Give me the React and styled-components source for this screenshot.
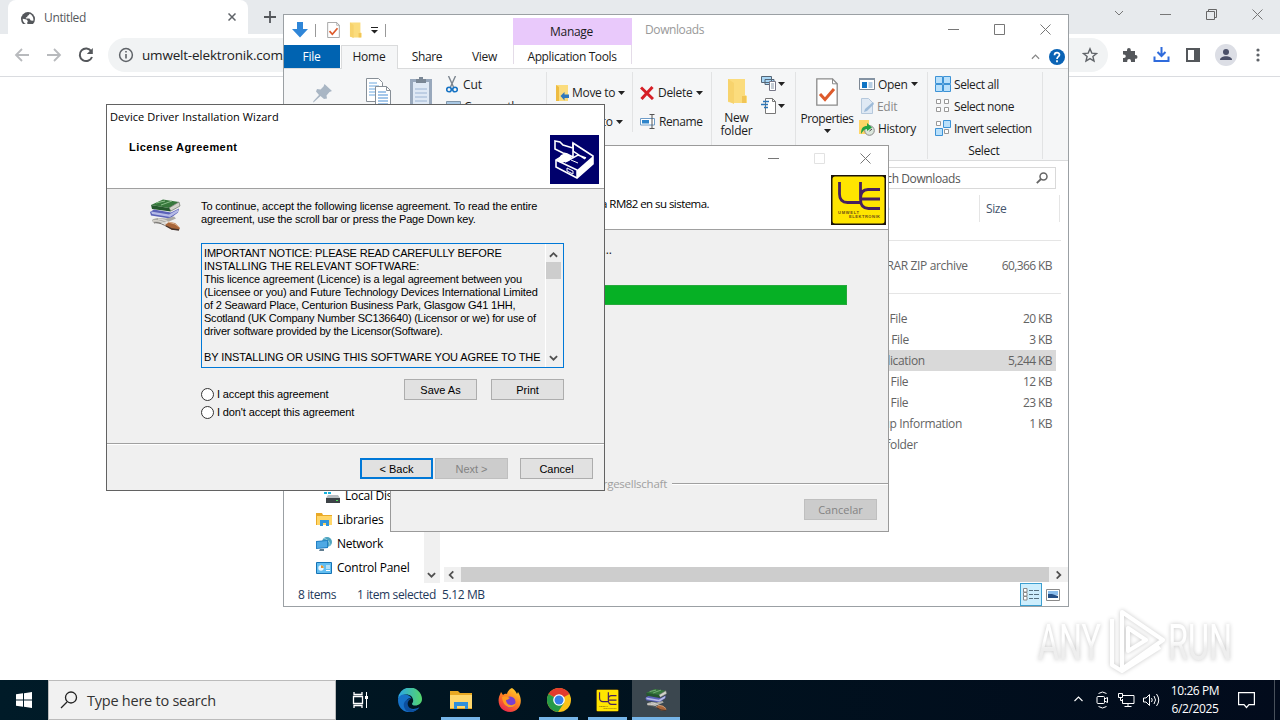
import React from 'react';
import styled, { createGlobalStyle, css } from 'styled-components';

const ui = '"Open Sans", "Noto Sans", sans-serif';
const dialog = '"Liberation Sans", Arial, sans-serif';

const GlobalStyle = createGlobalStyle`
  *, *::before, *::after {
    box-sizing: border-box;
  }
  body {
    margin: 0;
    overflow: hidden;
    background: #fff;
    font-family: ${ui};
    font-size: 12px;
    color: #1b1b1b;
  }
  svg {
    display: block;
    flex: none;
  }
`;

/* ---------- icons ---------- */

const Icon = ({ w = 16, h = w, vw = w, vh = h, children }) => (
  <svg width={w} height={h} viewBox={`0 0 ${vw} ${vh}`} fill="none">{children}</svg>
);

const Caret = () => <Icon w={7} h={4}><path d="M0 0h7L3.5 4z" fill="#222" /></Icon>;

const Chevron = ({ dir = 'down', color = '#505050', size = 9, stroke = 2 }) => {
  const turn = { down: 0, left: 90, up: 180, right: 270 }[dir];
  return (
    <Icon w={size} vw={10}>
      <path d="M1 3l4 4 4-4" stroke={color} strokeWidth={stroke} transform={`rotate(${turn} 5 5)`} />
    </Icon>
  );
};

const Minimize = ({ color = '#777' }) => <Icon w={11}><path d="M0 5.5h11" stroke={color} /></Icon>;
const Maximize = ({ color = '#777' }) => <Icon w={11}><path d="M.5.5h10v10H.5z" stroke={color} /></Icon>;
const Close = ({ color = '#777' }) => <Icon w={11}><path d="M.5.5l10 10m0-10l-10 10" stroke={color} /></Icon>;
const Restore = () => <Icon w={11}><path d="M.5 2.5h8v8h-8zM2.500 2.500v-2h8v8h-2" stroke="#666" /></Icon>;

const Globe = () => (
  <Icon w={14} vw={20}>
    <circle cx="10" cy="10" r="10" fill="#54575b" />
    <path d="M2.500 9.500l5.500 1 2 2.500-1 1v3.500c-4-.5-7-4-6.500-8zM12 2.500c0 2-1 2-3 3v2H7V9h5l2 3 3.500.5c1-4-1.500-9-5.500-10z" fill="#fff" />
  </Icon>
);

const NavArrow = ({ flip }) => (
  <Icon w={16}>
    <g transform={flip ? 'matrix(-1 0 0 1 16 0)' : undefined}>
      <path d="M15 8H2m6-6L2 8l6 6" stroke="#b8babd" strokeWidth="1.800" />
    </g>
  </Icon>
);

const Reload = () => (
  <Icon w={16}>
    <path d="M13.300 4.200A6.300 6.300 0 1 0 14 10" stroke="#54575b" strokeWidth="2" />
    <path d="M14.800 1v6h-6z" fill="#54575b" />
  </Icon>
);

const Info = () => (
  <Icon w={16}>
    <circle cx="8" cy="8" r="6.400" stroke="#5f6368" strokeWidth="1.500" />
    <path d="M8 7v4.500M8 4v1.600" stroke="#5f6368" strokeWidth="1.600" />
  </Icon>
);

const Star = () => (
  <Icon w={16}>
    <path d="M8 1.800l1.800 4.300 4.700.4-3.600 3 1.100 4.500L8 11.600 4 14l1.100-4.500-3.600-3 4.700-.4z" stroke="#5f6368" strokeWidth="1.400" />
  </Icon>
);

const Puzzle = () => (
  <Icon w={16}>
    <path d="M1 4h4V3a1.900 1.900 0 0 1 3.800 0v1H13v4h.6a1.900 1.900 0 0 1 0 3.800H13V15H9v-1a1.900 1.900 0 0 0-3.800 0v1H1v-4h1a1.800 1.800 0 0 0 0-3.600H1z" fill="#54575b" />
  </Icon>
);

const DownloadIcon = () => (
  <Icon w={17}>
    <path d="M8.500 1v8M4.500 6l4 4 4-4M1.500 10.500v4.500h14v-4.500" stroke="#2f6bdc" strokeWidth="2" />
  </Icon>
);

const SidePanel = () => (
  <Icon w={14}><path d="M1 1h12v12H1z" stroke="#54575b" strokeWidth="2" /><path d="M8 1h5v12H8z" fill="#54575b" /></Icon>
);

const Person = () => (
  <Icon w={22}>
    <circle cx="11" cy="11" r="11" fill="#dcdee5" />
    <circle cx="11" cy="8" r="3" fill="#4b5068" />
    <path d="M5 16c0-5 12-5 12 0z" fill="#4b5068" />
  </Icon>
);

const Dots = () => (
  <Icon w={4} h={16}>
    <circle cx="2" cy="3" r="1.600" fill="#5f6368" /><circle cx="2" cy="8" r="1.600" fill="#5f6368" /><circle cx="2" cy="13" r="1.600" fill="#5f6368" />
  </Icon>
);

const BlueArrow = () => <Icon w={16}><path d="M5 0h6v7h5l-8 8.500L0 7h5z" fill="#2f86d8" /></Icon>;

const MoreArrow = () => <Icon w={7} h={7}><path d="M0 .5h7" stroke="#222" /><path d="M0 3h7L3.500 6.500z" fill="#222" /></Icon>;

const CheckedPage = ({ w = 13, h = 16 }) => (
  <Icon w={w} h={h} vw={22} vh={28}>
    <path d="M.8.800h15.700l4.700 5v21.400H.8z" fill="#fff" stroke="#8b8b8b" strokeWidth="1.300" />
    <path d="M16.500.800v5h4.700" stroke="#8b8b8b" />
    <path d="M4 16l5 5.500 9-10.500" stroke="#dd5a2b" strokeWidth="3" />
  </Icon>
);

const Folder = ({ w = 13, h = 16 }) => (
  <Icon w={w} h={h} vw={20} vh={26}>
    <path d="M1 1h17v16l2 1v7H6l-5-1z" fill="#fbdc7d" />
    <path d="M1 1l6 4v21l-6-3z" fill="#f7d36d" />
    <path d="M15 18h4v7h-4z" fill="#f1c557" />
  </Icon>
);

const Pin = () => (
  <Icon w={22}>
    <path d="M12.500 2l7.500 7-2.500 1-3 3.500.5 3-3 .5-3.500-3L2 20l-1 .5.500-1.500 5.500-6-3-3.500L5 7l3.500.5 3-3z" fill="#a9b6c4" />
  </Icon>
);

const CopyPages = () => (
  <Icon w={26} h={30}>
    <path d="M.5.500h12l4 4v19H.500z" fill="#fff" stroke="#878f97" />
    <path d="M3 5h8M3 8h10M3 11h10M3 14h10M3 17h8" stroke="#6da8e0" />
    <path d="M9.500 8.500h11l4 4v17h-15z" fill="#fff" stroke="#878f97" />
    <path d="M20.500 8.500v4h4" stroke="#878f97" />
    <path d="M12 14h8M12 17h10M12 20h10M12 23h10M12 26h10" stroke="#4b8fd5" />
  </Icon>
);

const Clipboard = () => (
  <Icon w={22} h={30}>
    <path d="M1.500 3.500h19v26h-19z" fill="#dfe9f5" stroke="#98a8bc" strokeWidth="3" />
    <path d="M6 2h10v4H6z" fill="#7a8795" /><path d="M9 0h4v3H9z" fill="#7a8795" />
    <path d="M5 12h12M5 16h12M5 20h12M5 24h12" stroke="#9cb4d3" />
  </Icon>
);

const Scissors = () => (
  <Icon w={12} h={17}>
    <path d="M2.500 0l5 11M9.500 0l-5 11" stroke="#7b858f" strokeWidth="1.400" />
    <circle cx="3" cy="13.500" r="2.300" stroke="#1673c4" strokeWidth="1.600" />
    <circle cx="9" cy="13.500" r="2.300" stroke="#1673c4" strokeWidth="1.600" />
  </Icon>
);

const PathBox = () => <Icon w={15} h={11}><path d="M.5.500h14v10H.5z" fill="#a9c8e4" stroke="#8096aa" /></Icon>;

const FolderTo = () => (
  <Icon w={13} h={16}>
    <path d="M0 0h12v16H0z" fill="#fbdc7d" /><path d="M0 0l3 2v14H0z" fill="#eebc42" />
    <path d="M4.500 11l4-4v2.500H13v3.500H8.500v2.500z" fill="#2f78bd" />
  </Icon>
);

const RedCross = () => <Icon w={14}><path d="M1 1.500l12 11.500M12.500 1L1.500 13" stroke="#d61f26" strokeWidth="3" /></Icon>;

const RenameIcon = () => (
  <Icon w={16} h={15}>
    <path d="M.5 4.500h14v6.500H.5z" fill="#fff" stroke="#6e9cc8" /><path d="M2 6h7v3.500H2z" fill="#2d84cb" />
    <path d="M9.500.500h5M12 .5v14M9.500 14.500h5" stroke="#555" />
  </Icon>
);

const NewItem = () => (
  <Icon w={17} h={16}>
    <path d="M.5.500h10v6H.5zM4 3.500h9v5H4z" fill="#a8d6f5" stroke="#567" />
    <path d="M8.500 5.500h6v9h-6z" fill="#fff" stroke="#778" /><path d="M10 8h3M10 10h3M10 12h3" stroke="#89a" />
  </Icon>
);

const EasyAccess = () => (
  <Icon w={17} h={16}>
    <path d="M4.500.500h7l3 3v12h-10z" fill="#fff" stroke="#777" /><path d="M11.500.500v3h3" stroke="#777" />
    <path d="M2 3.500h6M0 6.500h7M3 9.500h4" stroke="#2a75b8" strokeWidth="1.300" />
  </Icon>
);

const OpenIcon = () => (
  <Icon w={16} h={12}>
    <path d="M.5.500h15v11H.5z" fill="#fff" stroke="#7c8793" /><path d="M0 0h16v2H0z" fill="#8493a3" />
    <path d="M3 4h5v6H3z" fill="#0f74c4" /><path d="M9.500 5h4M9.500 7h4M9.500 9h4" stroke="#6d9dc8" />
  </Icon>
);

const EditIcon = () => (
  <Icon w={15} h={16}>
    <path d="M2.500.500h7l4 4v11h-11z" fill="#dfe9f4" stroke="#b5c8dc" /><path d="M5 14l1-3 8-7 1 2-7 7z" fill="#9dbbd9" />
  </Icon>
);

const HistoryIcon = () => (
  <Icon w={16}>
    <path d="M0 0h10v14H0z" fill="#ffd667" /><circle cx="10.500" cy="10.500" r="4.800" fill="#dbe6dc" stroke="#888" />
    <path d="M2 14C2 8 4 6 8 6V3l5 4.500L8 11V9c-3 0-4 2-6 5z" fill="#27a343" /><path d="M10.500 11l2.500-2" stroke="#444" />
  </Icon>
);

const SelectGrid = ({ on }) => (
  <Icon w={16}>
    {[[1, 1], [9, 1], [1, 9], [9, 9]].map(([x, y], i) => (
      <g key={i}>
        {on[i] ? <path d={`M${x - 0.5} ${y - 0.5}h7v7h-7z`} fill="#b9e0fb" stroke="#3d93d6" />
          : <path d={`M${x + 0.5} ${y + 0.5}h4v4h-4z`} fill="#fff" stroke="#999" />}
      </g>
    ))}
  </Icon>
);

const Help = () => (
  <Icon w={16}>
    <circle cx="8" cy="8" r="8" fill="#0a63b5" />
    <path d="M5.500 6.200c0-3.400 5-3.100 5-.4C10.500 7.800 8 7.600 8 10M8 11.300v1.900" stroke="#fff" strokeWidth="1.700" />
  </Icon>
);

const Magnifier = () => (
  <Icon w={12}><circle cx="7.500" cy="4.500" r="3.500" stroke="#666" strokeWidth="1.500" /><path d="M5 7L.8 11.200" stroke="#666" strokeWidth="1.800" /></Icon>
);

const DiskIcon = () => (
  <Icon w={16}>
    <path d="M0 0h3v3H0zM4 0h3v3H4zM0 4h3v2H0zM4 4h3v2H4z" fill="#16b3dd" />
    <path d="M4 7h10l2 3H2z" fill="#b9bec2" /><path d="M2 10h14v5H2z" fill="#3d4347" /><path d="M12 12h2v1h-2z" fill="#4ce05a" />
  </Icon>
);

const LibrariesIcon = () => (
  <Icon w={16}>
    <path d="M0 1h6l1 2h9v10H0z" fill="#e9a927" /><path d="M1 4h15v9H1z" fill="#ffd668" />
    <path d="M4 14V8h9v6h-3v-3H7v3z" fill="#2d93dc" />
  </Icon>
);

const NetworkIcon = () => (
  <Icon w={16}>
    <circle cx="11" cy="6" r="5" fill="#4da3bf" /><path d="M8 2c4 2 6 4 6 8" stroke="#9ed6e8" />
    <path d="M0 5l12-1v8L0 13z" fill="#2380c4" /><path d="M1 6l10-1v6L1 12z" fill="#4fa9e4" /><path d="M4 13h4v2H3z" fill="#617d90" />
  </Icon>
);

const ControlIcon = () => (
  <Icon w={16} h={12}>
    <path d="M.500.500h15v11H.500z" fill="#62bdf0" stroke="#1573b5" />
    <circle cx="5" cy="6" r="2.700" fill="#eaf7ff" /><path d="M5 6V3.300A2.700 2.700 0 0 1 7.700 6z" fill="#e8942a" />
    <path d="M10 4h4M10 6h4M10 8.500h4" stroke="#fff" />
  </Icon>
);

const DetailsIcon = () => (
  <Icon w={17} h={13}>
    {[0, 4, 8].map(y => (
      <g key={y}><path d={`M.5 ${y + 0.5}h3.500v3.500H.5z`} fill="#fff" stroke="#888" /><path d={`M6 ${y + 2.5}h4m1 0h5`} stroke="#55707f" /></g>
    ))}
  </Icon>
);

const ThumbIcon = () => (
  <Icon w={14} h={12}>
    <path d="M.5.500h13v11H.5z" fill="#fff" stroke="#8a8a8a" /><path d="M2 2h10v4H2z" fill="#8bbdec" /><path d="M2 5l4 0 6 2v2H2z" fill="#254f86" />
  </Icon>
);

const UeLogo = ({ w = 55, h = 50 }) => (
  <svg width={w} height={h} viewBox="0 0 55 50" preserveAspectRatio="none" fill="none">
    <path d="M0 0h55v50H0z" fill="#1b130a" />
    <rect x="1.500" y="1.500" width="52" height="47" rx="2.500" fill="#ffe500" />
    <path d="M8.500 7v12q0 8.500 8 8.500H29.500M29.500 7v17q0 9.500 8 9.500H49M49 14.500H37q-7.500 0-7.500 9M29.500 24H49" stroke="#46205f" strokeWidth="2.800" />
    <text x="7" y="39" fontFamily={dialog} fontSize="4" fontWeight="700" fill="#6a4a18" textLength="21">UMWELT</text>
    <text x="18" y="43" fontFamily={dialog} fontSize="4" fontWeight="700" fill="#6a4a18" textLength="31">ELEKTRONIK</text>
  </svg>
);

const SetupBox = () => (
  <Icon w={49}>
    <path d="M0 0h49v49H0z" fill="#00006c" />
    <path d="M23 8l20 13v8L27 43 6 32v-7l17-10z" fill="#00006c" stroke="#fff" strokeWidth="1.600" />
    <path d="M27 35l16-14v8L27 43z" fill="#fff" />
    <path d="M6 25l21 10v8M23 8v8l12 8M15 27l13-7 8 3" stroke="#fff" strokeWidth="1.500" />
    <path d="M21 25l7 3M17 33l6 3v3l-6-3z" stroke="#fff" />
    <path d="M5 6l5 1 3 3 10 3v9l-6-3-4-1-8-4z" fill="#00006c" stroke="#fff" strokeWidth="1.600" />
    <path d="M11 20l5-2 6 4-3 4-8 2-4-2z" fill="#fff" />
  </Icon>
);

const Books = ({ w = 34, h = 32 }) => (
  <Icon w={w} h={h} vw={34} vh={32}>
    <path d="M3 6L15 .500l16 2.500-10 6z" fill="#37783c" />
    <path d="M8 4l9-2M13 6l11-4" stroke="#8cbf8c" />
    <path d="M21 9l10-6 1 4-9 5z" fill="#d4d4cc" stroke="#6a7468" strokeWidth=".7" />
    <path d="M3 6l18 3 2 3.500-19-2.500z" fill="#24582c" />
    <path d="M2 13l4-2.500 17 3 8-4-1 4-8 6-19-3z" fill="#5b62b8" />
    <path d="M3 12.500l18 3 9-5v2.500l-8 5-18-3z" fill="#b6bbe6" />
    <path d="M4 21c3-2.500 9-2 14-1.500l8-2 2 2-7 3-10 2-6-1z" fill="#aaa9a5" />
    <path d="M5 22c5-1 14 2 17 6M10 20c5 0 11 3 15 7" stroke="#d9d6cf" strokeWidth="1.400" />
    <path d="M6 24c4-1 8 1 12 3" stroke="#6f6c68" />
    <path d="M17 26l4-3 6 1 5 5-1 2h-7z" fill="#a8663b" />
    <path d="M18 27l6 3 7 1" stroke="#43322c" strokeWidth="1.300" />
    <path d="M20 23l7 2 4 3" stroke="#e0b28c" />
  </Icon>
);

const TaskView = () => (
  <Icon w={18}>
    <path d="M3 1v2.500h8V1M3 17v-2.500h8V17M2.500 5.500h9v7h-9z" stroke="#fff" strokeWidth="1.300" />
    <path d="M15.500 1v16" stroke="#fff" /><path d="M14 5h3v3h-3z" fill="#fff" />
  </Icon>
);

const Edge = () => (
  <Icon w={24}>
    <defs>
      <linearGradient id="edgeTop" x1="0" y1="0" x2="1" y2="0"><stop stopColor="#2aa6e8" /><stop offset="1" stopColor="#55d66b" /></linearGradient>
    </defs>
    <path d="M0 12a12 12 0 0 1 24-1c0 4-3 6.500-7 6.500-2 0-3-.8-3-1.600 0-1 1.200-1.200 1.200-3.400C15 8 11 6 7.500 6.500 3 7 0 10 0 12z" fill="url(#edgeTop)" />
    <path d="M0 12c0-4 4-6 7.500-5.500 3 .3 5 2 6 4C9 9.500 7 14 9 17.500c3 4.500 8 4 12.500 1.800C15 28 0 25 0 12z" fill="#1672c8" />
    <path d="M8.500 23c-5-5-3-12 5-12.500C8 13 9 19 13 21c3 1.500 6 .5 8.500-1.700C18 24 13 25 8.500 23z" fill="#0c4f9e" />
  </Icon>
);

const Files = () => (
  <Icon w={22} h={20}>
    <path d="M0 1h8l2 2h12v16H0z" fill="#e8a823" /><path d="M0 5h22v13H0z" fill="#ffd76c" />
    <path d="M4 19v-7h14v7h-3v-3H7v3z" fill="#2f8fdb" />
  </Icon>
);

const Firefox = () => (
  <Icon w={24}>
    <defs><linearGradient id="fox" x1=".8" y1="0" x2=".2" y2="1"><stop stopColor="#ffd42a" /><stop offset=".5" stopColor="#ff7b22" /><stop offset="1" stopColor="#e91e50" /></linearGradient></defs>
    <path d="M14 0c3 2 4 4 5 6l1-2c6 9 2 20-8 20C4 24-1 17 1 9c.5-2 1.500-3 2-5l2 3c1-1 3-1.500 4-1 .5-3 3-5 5-6z" fill="url(#fox)" />
    <circle cx="12" cy="14" r="5.500" fill="#7a3fd0" /><path d="M4 9c3-2 6 0 8 1-2 1-2 2-4 2 0 5 6 7 10 3-2 7-13 6-14-6z" fill="#ff9a1f" />
  </Icon>
);

const ChromeLogo = () => (
  <Icon w={24}>
    <circle cx="12" cy="12" r="12" fill="#fbc116" />
    <path d="M12 12L1.600 6A12 12 0 0 1 22.400 6z" fill="#e33b2e" />
    <path d="M12 12L1.600 6A12 12 0 0 0 11 24l6-9z" fill="#269a48" />
    <circle cx="12" cy="12" r="5.800" fill="#fff" /><circle cx="12" cy="12" r="4.500" fill="#357ee8" />
  </Icon>
);

const WindowsLogo = () => <Icon w={16}><path d="M0 2.300l7-1v6.200H0zM8 1.200L16 0v7.500H8zM0 8.500h7v6.200l-7-1zM8 8.500h8V16l-8-1.200z" fill="#fff" /></Icon>;

const SearchGlass = () => <Icon w={18}><circle cx="11" cy="6.500" r="5.500" stroke="#222" strokeWidth="1.300" /><path d="M7 11l-6 6" stroke="#222" strokeWidth="1.300" /></Icon>;

const MeetNow = () => (
  <Icon w={14} h={18}>
    <path d="M2.500 2.500q4-3 8 0M2.500 15.500q4 3 8 0" stroke="#fff" /><rect x="1" y="5.500" width="7.500" height="7" rx="1" stroke="#fff" /><path d="M8.500 8l3-1.500v5l-3-1.500z" stroke="#fff" />
  </Icon>
);

const Lan = () => (
  <Icon w={17} h={15}>
    <path d="M5 2.500h11v8H4.500V6M10 10.500v3M6.500 13.500h7M.5.500h4v4h-4zM2.500 4.500v3h2" stroke="#fff" />
  </Icon>
);

const Speaker = () => (
  <Icon w={17} h={14}>
    <path d="M.5 5H3l3.500-3.500v11L3 9H.500z" stroke="#fff" /><path d="M8.500 5q1.500 2 0 4M11 3q3 4 0 8M13.500 1q4.500 6 0 12" stroke="#fff" />
  </Icon>
);

const Bubble = () => <Icon w={17} h={17}><path d="M.600.600h15.800v12H11L8.500 15.500 6 12.600H.600z" stroke="#fff" strokeWidth="1.200" /></Icon>;

/* ---------- desktop & browser ---------- */

const Desktop = styled.div`
  position: relative;
  width: 1280px;
  height: 720px;
  overflow: hidden;
  display: flex;
  flex-direction: column;
`;

const Browser = styled.div`
  flex: 1;
  display: flex;
  flex-direction: column;
  background: #fff;
`;

const TabStrip = styled.div`
  display: flex;
  height: 34px;
  padding-left: 8px;
  background: #e7eaed;
`;

const BrowserTab = styled.div`
  display: flex;
  align-items: center;
  width: 240px;
  padding: 0 12px 0 13px;
  background: #fff;
  border-radius: 8px 8px 0 0;
  color: #55585c;
  letter-spacing: -0.35px;
  span {
    flex: 1;
    margin-left: 9px;
  }
`;

const NewTab = styled.div`
  display: flex;
  align-items: center;
  padding-left: 16px;
  flex: 1;
`;

const Controls = styled.div`
  display: flex;
  align-items: center;
  justify-content: flex-end;
  gap: ${props => props.$gap}px;
  padding-right: ${props => props.$right}px;
  height: ${props => props.$height}px;
`;

const Toolbar = styled.div`
  display: flex;
  align-items: center;
  height: 43px;
  padding: 0 20px 1px 14px;
  border-bottom: 1px solid #dadce0;
`;

const ToolGroup = styled.div`
  display: flex;
  align-items: center;
  gap: ${props => props.$gap}px;
  svg:nth-child(3):not(:last-child) {
    margin-left: 1px;
  }
  svg:nth-child(5) {
    margin-left: 4px;
  }
`;

const Omnibox = styled.div`
  display: flex;
  align-items: center;
  flex: 1;
  height: 34px;
  margin: 0 14px 0 14px;
  padding: 0 10px;
  border-radius: 17px;
  background: #f1f3f4;
  color: #222;
  font-size: 13.5px;
  letter-spacing: -0.2px;
  span {
    flex: 1;
    margin-left: 8px;
  }
`;

/* ---------- windows ---------- */

const Window = styled.section`
  position: absolute;
  display: flex;
  flex-direction: column;
  left: ${props => props.$x}px;
  top: ${props => props.$y}px;
  width: ${props => props.$w}px;
  height: ${props => props.$h}px;
  border: 1px solid ${props => props.$border};
  background: ${props => props.$bg || '#fff'};
`;

const TitleRow = styled.div`
  display: flex;
  height: 30px;
  flex: none;
`;

const QuickAccess = styled.div`
  display: flex;
  align-items: center;
  width: 229px;
  padding-left: 8px;
  > svg {
    margin-right: 9px;
  }
`;

const Divider = styled.i`
  width: 1px;
  height: 13px;
  margin: 0 11px 0 -2px;
  background: #999;
`;

const ManageTab = styled.div`
  width: 119px;
  margin-top: 3px;
  padding-right: 2px;
  background: #e9c9fb;
  text-align: center;
  line-height: 28px;
  letter-spacing: -0.3px;
`;

const WindowTitle = styled.div`
  flex: 1;
  padding-left: 13px;
  line-height: 30px;
  color: #999;
  letter-spacing: -0.4px;
`;

const RibbonTabs = styled.div`
  display: flex;
  flex: none;
  height: 24px;
  border-bottom: 1px solid #dadbdc;
`;

const RibbonTab = styled.div`
  width: ${props => props.$w}px;
  height: 24px;
  padding-right: 1px;
  line-height: 24px;
  text-align: center;
  letter-spacing: ${props => props.$ls ?? -0.2}px;
  ${props => props.$file && css`
    height: 23px;
    margin-right: 1px;
    background: #0063b1;
    color: #fff;
  `}
  ${props => props.$active && css`
    background: #f5f6f7;
    border: 1px solid #dadbdc;
    border-bottom: 0;
    line-height: 22px;
  `}
  ${props => props.$boxed && css`
    height: 19px;
    border-left: 1px solid #e4dce8;
    border-right: 1px solid #e4dce8;
  `}
`;

const TabsEnd = styled.div`
  display: flex;
  align-items: center;
  justify-content: flex-end;
  gap: 9px;
  flex: 1;
  padding-right: 3px;
`;

const Ribbon = styled.div`
  display: flex;
  flex: none;
  height: 92px;
  background: #f5f6f7;
  border-bottom: 1px solid #dadbdc;
`;

const RibbonGroup = styled.div`
  display: flex;
  width: ${props => props.$w}px;
  height: ${props => props.$h || 87}px;
  margin-top: 3px;
  padding: ${props => props.$pad || '1px 0 0'};
  border-right: 1px solid #e2e3e4;
`;

const Commands = styled.div`
  display: flex;
  flex-direction: column;
  margin-left: ${props => props.$left || 0}px;
  padding-top: ${props => props.$top || 0}px;
`;

const Command = styled.div`
  display: flex;
  align-items: center;
  flex: none;
  gap: ${props => props.$gap ?? 3}px;
  height: ${props => props.$h || 22}px;
  white-space: nowrap;
  color: ${props => (props.$off ? '#8a8a8a' : '#1e1e1e')};
  letter-spacing: ${props => props.$ls ?? -0.3}px;
`;

const BigCommand = styled.div`
  display: flex;
  flex-direction: column;
  align-items: center;
  width: ${props => props.$w}px;
  padding-top: 5px;
  text-align: center;
  line-height: 13px;
  letter-spacing: ${props => props.$ls || 0}px;
  > div {
    margin-top: ${props => props.$gap || 0}px;
    margin-bottom: 4px;
  }
`;

const GroupName = styled.div`
  flex: none;
  padding-left: 1px;
  text-align: center;
  line-height: 24px;
  letter-spacing: -0.3px;
`;

const AddressRow = styled.div`
  display: flex;
  justify-content: flex-end;
  flex: none;
  height: 34px;
  padding: 6px 12px 0 0;
`;

const SearchBox = styled.div`
  display: flex;
  align-items: center;
  justify-content: space-between;
  width: 203px;
  height: 22px;
  padding: 0 7px 0 9px;
  border: 1px solid #d9d9d9;
  color: #555;
  letter-spacing: -0.4px;
`;

const ExplorerBody = styled.div`
  display: flex;
  flex: 1;
`;

const NavPane = styled.div`
  display: flex;
  flex-direction: column;
  justify-content: flex-end;
  width: 140px;
  padding-bottom: 3px;
`;

const NavItem = styled.div`
  display: flex;
  align-items: center;
  gap: 5px;
  height: 24px;
  padding: 0 0 1px ${props => props.$indent}px;
  color: #000;
  letter-spacing: -0.25px;
  white-space: nowrap;
`;

const VScroll = styled.div`
  display: flex;
  flex-direction: column;
  justify-content: flex-end;
  width: 16px;
  margin-right: 4px;
  padding: 0 0 4px 3px;
  background: #f0f0f0;
`;

const FileList = styled.div`
  display: flex;
  flex-direction: column;
  flex: 1;
`;

const Columns = styled.div`
  display: grid;
  grid-template-columns: 420px 116px 80px;
  height: 27px;
  line-height: 27px;
  color: #44546c;
  letter-spacing: -0.4px;
  span {
    border-right: 1px solid #e5e5e5;
  }
  span:last-child {
    padding-left: 6px;
  }
`;

const GroupLine = styled.div`
  width: 617px;
  height: ${props => props.$h}px;
  margin-bottom: 14px;
  border-bottom: 1px solid #e5e5e5;
`;

const FileRow = styled.div`
  display: grid;
  grid-template-columns: 422px 120px 1fr;
  width: 612px;
  height: 21px;
  padding-right: 4px;
  line-height: 22px;
  color: #636363;
  letter-spacing: -0.35px;
  white-space: nowrap;
  background: ${props => (props.$selected ? '#d9d9d9' : 'none')};
  span:last-child {
    text-align: right;
    letter-spacing: -0.6px;
  }
`;

const HScroll = styled.div`
  display: flex;
  align-items: center;
  justify-content: space-between;
  height: 15px;
  margin: auto 0 1px;
  padding: 0 5px 0 3px;
  background: #f0f0f0;
  div {
    width: 588px;
    height: 15px;
    background: #cdcdcd;
  }
`;

const StatusBar = styled.div`
  display: flex;
  align-items: center;
  flex: none;
  height: 23px;
  padding: 0 8px 0 14px;
  color: #1e395b;
  letter-spacing: -0.38px;
`;

const StatusText = styled.span`
  width: ${props => props.$w}px;
  margin-right: ${props => (props.$grow ? 'auto' : 0)};
  white-space: nowrap;
`;

const ViewButton = styled.div`
  display: flex;
  align-items: center;
  justify-content: center;
  width: 22px;
  height: 23px;
  margin-right: 4px;
  border: 1px solid #3c9fd0;
  background: #cdeefd;
`;

/* ---------- installer ---------- */

const InstallerHead = styled.div`
  height: 84px;
  flex: none;
  background: #fff;
  border-bottom: 1px solid #a0a0a0;
`;

const HeadRow = styled.div`
  display: flex;
  justify-content: space-between;
  padding: 5px 2px 0 0;
`;

const HeadText = styled.div`
  width: 318px;
  padding-top: 21px;
  font-size: 11.5px;
  line-height: 16px;
  letter-spacing: -0.55px;
  text-align: right;
  white-space: nowrap;
  color: #000;
`;

const StatusLine = styled.div`
  width: 221px;
  margin-top: 12px;
  line-height: 16px;
  text-align: right;
`;

const Progress = styled.div`
  width: 418px;
  height: 20px;
  margin: 27px 0 1px 38px;
  background: #06b025;
  border: 1px solid #27a93c;
`;

const Branding = styled.div`
  display: flex;
  align-items: center;
  justify-content: flex-end;
  gap: 5px;
  height: 16px;
  margin-top: 169px;
  font-size: 11.5px;
  letter-spacing: -0.25px;
  color: #a0a0a0;
  &::after {
    content: '';
    width: 216px;
    height: 2px;
    margin-top: 2px;
    border-top: 1px solid #a0a0a0;
    background: #fff;
  }
`;

/* ---------- dialog controls ---------- */

const Button = styled.div`
  width: 73px;
  height: 21px;
  line-height: 20px;
  text-align: center;
  font-size: 11px;
  color: #000;
  background: #e1e1e1;
  border: 1px solid #adadad;
  ${props => props.$focus && css`
    border: 2px solid #0078d7;
    line-height: 18px;
  `}
  ${props => props.$off && css`
    background: #ccc;
    border-color: #bfbfbf;
    color: #838383;
  `}
`;

const Buttons = styled.div`
  display: flex;
  justify-content: flex-end;
  padding: ${props => props.$pad};
`;

const Wizard = styled(Window)`
  font-family: ${dialog};
  font-size: 11px;
  color: #000;
`;

const WizardHead = styled.div`
  display: flex;
  justify-content: space-between;
  height: 84px;
  flex: none;
  background: #fff;
  border-bottom: 1px solid #a0a0a0;
  padding: 5px 5px 0 3px;
  > svg {
    margin-top: 25px;
  }
  p {
    margin: 0;
    font-family: ${ui};
    font-size: 11px;
    line-height: 14px;
    letter-spacing: 0.08px;
  }
  h1 {
    margin: 16px 0 0 19px;
    font-size: 11px;
    line-height: 14px;
    letter-spacing: 0.43px;
  }
`;

const Intro = styled.div`
  display: flex;
  gap: 19px;
  height: 54px;
  padding: 11px 0 0 41px;
  > svg {
    margin-top: -1px;
  }
`;

const TextArea = styled.div`
  display: flex;
  width: 363px;
  height: 125px;
  flex: none;
  margin-left: 94px;
  border: 1px solid #0078d7;
`;

const LicenseText = styled.div`
  flex: 1;
  min-width: 0;
  padding: 3px 0 0 2px;
`;

const Line = styled.div`
  height: 13px;
  line-height: 13px;
  white-space: nowrap;
  letter-spacing: ${props => props.$ls || 0}px;
`;

const TextScroll = styled.div`
  display: flex;
  flex-direction: column;
  align-items: center;
  flex: none;
  width: 18px;
  padding: 6px 2px 5px 0;
  border-left: 1px solid #fff;
  div {
    width: 15px;
    height: 17px;
    margin: 3px 0 auto;
    background: #cdcdcd;
  }
`;

const Choices = styled.div`
  display: flex;
  justify-content: space-between;
  padding: 11px 40px 0 94px;
`;

const Radio = styled.div`
  display: flex;
  align-items: center;
  gap: 3px;
  height: 18px;
  &::before {
    content: '';
    width: 13px;
    height: 13px;
    border: 1px solid #333;
    border-radius: 50%;
    background: #fff;
  }
`;

const RadioList = styled.div`
  padding-top: 6px;
  letter-spacing: -0.13px;
`;

const ButtonPair = styled.div`
  display: flex;
  gap: 14px;
`;

const Footer = styled.div`
  display: flex;
  gap: 2px;
  justify-content: flex-end;
  margin-top: auto;
  height: 47px;
  padding: 14px 11px 0 0;
  border-top: 1px solid #a0a0a0;
  box-shadow: inset 0 1px #fff;
  ${Button}:last-child {
    margin-left: 10px;
  }
`;

/* ---------- taskbar ---------- */

const Taskbar = styled.div`
  display: flex;
  height: 40px;
  flex: none;
  background: linear-gradient(90deg, #001b28, #00131f 45%, #020b1c);
`;

const TaskItem = styled.div`
  display: flex;
  align-items: center;
  justify-content: center;
  width: ${props => props.$w || 49}px;
  background: ${props => (props.$active ? '#3b474f' : 'none')};
  ${props => props.$open && css`
    box-shadow: inset 0 -3px #76b5e8;
  `}
  ${props => props.$inset && css`
    width: 39px;
    margin: 0 5px;
  `}
`;

const TaskSearch = styled.div`
  display: flex;
  align-items: center;
  gap: 9px;
  width: 288px;
  padding-left: 11px;
  background: #f1f1f1;
  border: 1px solid #bbb;
  font-size: 14.5px;
  letter-spacing: -0.24px;
  color: #333;
`;

const Tray = styled.div`
  display: flex;
  align-items: center;
  margin-left: auto;
  gap: 8px;
  padding-right: 5px;
  > svg:first-child {
    margin-right: 3px;
  }
`;

const Clock = styled.div`
  width: 56px;
  margin: 0 7px 0 -1px;
  font-size: 12px;
  line-height: 18px;
  letter-spacing: -0.4px;
  text-align: center;
  color: #fff;
  white-space: nowrap;
`;

const ShowDesktop = styled.div`
  width: 1px;
  height: 40px;
  margin-left: 11px;
  background: #48505b;
`;

const Watermark = styled.div`
  position: absolute;
  left: 1034px;
  top: 606px;
  filter: drop-shadow(0 0 2px rgba(0, 0, 0, 0.22));
`;

const files = [
  { type: 'CAT File', size: '20 KB' },
  { type: 'Text File', size: '3 KB' },
  { type: 'Application', size: '5,244 KB', selected: true },
  { type: 'CAB File', size: '12 KB' },
  { type: 'DAT File', size: '23 KB' },
  { type: 'Setup Information', size: '1 KB' },
  { type: 'File folder', size: '' },
];

const license = [
  ['IMPORTANT NOTICE: PLEASE READ CAREFULLY BEFORE', -0.18],
  ['INSTALLING THE RELEVANT SOFTWARE:', -0.03],
  ['This licence agreement (Licence) is a legal agreement between you', -0.18],
  ['(Licensee or you) and Future Technology Devices International Limited', -0.15],
  ['of 2 Seaward Place, Centurion Business Park, Glasgow G41 1HH,', -0.2],
  ['Scotland (UK Company Number SC136640) (Licensor or we) for use of', -0.23],
  ['driver software provided by the Licensor(Software).', -0.2],
  ['', 0],
  ['BY INSTALLING OR USING THIS SOFTWARE YOU AGREE TO THE', -0.1],
];

const BrowserWindow = () => (
  <Browser>
    <TabStrip>
      <BrowserTab>
        <Globe />
        <span>Untitled</span>
        <Icon w={8}><path d="M.5.500l7 7m0-7l-7 7" stroke="#5f6368" strokeWidth="1.500" /></Icon>
      </BrowserTab>
      <NewTab><Icon w={12}><path d="M6 0v12M0 6h12" stroke="#54575b" strokeWidth="1.800" /></Icon></NewTab>
      <Controls $gap={35} $right={17} $height={28}>
        <Chevron color="#777" size={12} stroke={1} />
        <Minimize /><Restore /><Close />
      </Controls>
    </TabStrip>
    <Toolbar>
      <ToolGroup $gap={16}><NavArrow /><NavArrow flip /><Reload /></ToolGroup>
      <Omnibox>
        <Info />
        <span>umwelt-elektronik.com/</span>
        <Star />
      </Omnibox>
      <ToolGroup $gap={15}><Puzzle /><DownloadIcon /><SidePanel /><Person /><Dots /></ToolGroup>
    </Toolbar>
  </Browser>
);

const ExplorerRibbon = () => (
  <Ribbon>
    <RibbonGroup $w={263} $pad="1px 0 0 28px">
      <Commands $top={9}><Pin /></Commands>
      <Commands $left={32} $top={5}><CopyPages /></Commands>
      <Commands $left={18} $top={4}><Clipboard /></Commands>
      <Commands $left={14}>
        <Command $gap={5} $ls={-0.1}><Scissors />Cut</Command>
        <Command><PathBox />Copy path</Command>
      </Commands>
    </RibbonGroup>
    <RibbonGroup $w={86} $h={60} $pad="6px 0 0 9px">
      <Commands>
        <Command $h={29}><FolderTo />Move to<Caret /></Command>
        <Command $h={29}><FolderTo />Copy to<Caret /></Command>
      </Commands>
    </RibbonGroup>
    <RibbonGroup $w={79} $pad="6px 0 0 7px">
      <Commands>
        <Command $h={29} $gap={4}><RedCross />Delete<Caret /></Command>
        <Command $h={29} $ls={-0.4}><RenameIcon />Rename</Command>
      </Commands>
    </RibbonGroup>
    <RibbonGroup $w={84}>
      <BigCommand $w={49} $gap={7} $ls={-0.2}><Folder w={20} h={26} /><div>New<br />folder</div></BigCommand>
      <Commands>
        <Command $gap={0}><NewItem /><Caret /></Command>
        <Command $gap={0}><EasyAccess /><Caret /></Command>
      </Commands>
    </RibbonGroup>
    <RibbonGroup $w={132} $pad="1px 0 0 2px">
      <BigCommand $w={58} $gap={6} $ls={-0.5}><CheckedPage w={22} h={28} /><div>Properties</div><Caret /></BigCommand>
      <Commands $left={3}>
        <Command><OpenIcon />Open<Caret /></Command>
        <Command $off><EditIcon />Edit</Command>
        <Command><HistoryIcon />History</Command>
      </Commands>
    </RibbonGroup>
    <RibbonGroup $w={115} $pad="1px 0 0 7px">
      <Commands>
        <Command $ls={-0.42}><SelectGrid on={[1, 1, 1, 1]} />Select all</Command>
        <Command $ls={-0.45}><SelectGrid on={[0, 0, 0, 0]} />Select none</Command>
        <Command $ls={-0.5}><SelectGrid on={[0, 1, 1, 0]} />Invert selection</Command>
        <GroupName>Select</GroupName>
      </Commands>
    </RibbonGroup>
  </Ribbon>
);

const Explorer = () => (
  <Window $x={283} $y={14} $w={786} $h={593} $border="#9ba0a4">
    <TitleRow>
      <QuickAccess>
        <BlueArrow /><Divider /><CheckedPage /><Folder /><MoreArrow /><Divider />
      </QuickAccess>
      <ManageTab>Manage</ManageTab>
      <WindowTitle>Downloads</WindowTitle>
      <Controls $gap={35} $right={17} $height={29}><Minimize /><Maximize /><Close /></Controls>
    </TitleRow>
    <RibbonTabs>
      <RibbonTab $w={56} $file>File</RibbonTab>
      <RibbonTab $w={57} $active>Home</RibbonTab>
      <RibbonTab $w={59} $ls={-0.4}>Share</RibbonTab>
      <RibbonTab $w={56} $ls={-0.3}>View</RibbonTab>
      <RibbonTab $w={119} $boxed $ls={-0.38}>Application Tools</RibbonTab>
      <TabsEnd><Chevron dir="up" color="#888" size={9} stroke={1.4} /><Help /></TabsEnd>
    </RibbonTabs>
    <ExplorerRibbon />
    <AddressRow><SearchBox>Search Downloads<Magnifier /></SearchBox></AddressRow>
    <ExplorerBody>
      <NavPane>
        <NavItem $indent={40}><DiskIcon />Local Disk (C:)</NavItem>
        <NavItem $indent={32}><LibrariesIcon />Libraries</NavItem>
        <NavItem $indent={32}><NetworkIcon />Network</NavItem>
        <NavItem $indent={32}><ControlIcon />Control Panel</NavItem>
      </NavPane>
      <VScroll><Chevron /></VScroll>
      <FileList>
        <Columns><span /><span>Type</span><span>Size</span></Columns>
        <GroupLine $h={19} />
        <FileRow><span /><span>WinRAR ZIP archive</span><span>60,366 KB</span></FileRow>
        <GroupLine $h={18} />
        {files.map(file => (
          <FileRow key={file.type} $selected={file.selected}>
            <span /><span>{file.type}</span><span>{file.size}</span>
          </FileRow>
        ))}
        <HScroll><Chevron dir="left" /><div /><Chevron dir="right" /></HScroll>
      </FileList>
    </ExplorerBody>
    <StatusBar>
      <StatusText $w={59}>8 items</StatusText>
      <StatusText $w={85}>1 item selected</StatusText>
      <StatusText $w={60} $grow>5.12 MB</StatusText>
      <ViewButton><DetailsIcon /></ViewButton>
      <ThumbIcon />
    </StatusBar>
  </Window>
);

const Installer = () => (
  <Window $x={390} $y={145} $w={499} $h={387} $border="#9a9a9a" $bg="#f0f0f0">
    <InstallerHead>
      <Controls $gap={35} $right={17} $height={24}><Minimize /><Maximize color="#e2e2e2" /><Close /></Controls>
      <HeadRow>
        <HeadText>Por favor, espere mientras se instala RM82 en su sistema.</HeadText>
        <UeLogo />
      </HeadRow>
    </InstallerHead>
    <StatusLine>Instalando...</StatusLine>
    <Progress />
    <Branding>Umwelt Elektronik Ingenieurgesellschaft</Branding>
    <Buttons $pad="8px 11px 0 0"><Button $off>Cancelar</Button></Buttons>
  </Window>
);

const LicenseWizard = () => (
  <Wizard $x={106} $y={104} $w={499} $h={387} $border="#626262" $bg="#f0f0f0">
    <WizardHead>
      <div>
        <p>Device Driver Installation Wizard</p>
        <h1>License Agreement</h1>
      </div>
      <SetupBox />
    </WizardHead>
    <Intro>
      <Books />
      <div>
        <Line $ls={-0.1}>To continue, accept the following license agreement. To read the entire</Line>
        <Line $ls={-0.2}>agreement, use the scroll bar or press the Page Down key.</Line>
      </div>
    </Intro>
    <TextArea>
      <LicenseText>
        {license.map(([text, ls], i) => <Line key={i} $ls={ls}>{text}</Line>)}
      </LicenseText>
      <TextScroll><Chevron dir="up" /><div /><Chevron /></TextScroll>
    </TextArea>
    <Choices>
      <RadioList>
        <Radio>I accept this agreement</Radio>
        <Radio>I don't accept this agreement</Radio>
      </RadioList>
      <ButtonPair><Button>Save As</Button><Button>Print</Button></ButtonPair>
    </Choices>
    <Footer>
      <Button $focus>&lt; Back</Button>
      <Button $off>Next &gt;</Button>
      <Button>Cancel</Button>
    </Footer>
  </Wizard>
);

const App = () => (
  <>
    <GlobalStyle />
    <Desktop>
      <BrowserWindow />
      <Taskbar>
        <TaskItem $w={48}><WindowsLogo /></TaskItem>
        <TaskSearch><SearchGlass />Type here to search</TaskSearch>
        <TaskItem $w={48}><TaskView /></TaskItem>
        <TaskItem $w={52}><Edge /></TaskItem>
        <TaskItem $open $inset><Files /></TaskItem>
        <TaskItem><Firefox /></TaskItem>
        <TaskItem $open $inset><ChromeLogo /></TaskItem>
        <TaskItem $open $inset><UeLogo w={23} h={23} /></TaskItem>
        <TaskItem $w={48} $open $active><Books w={24} h={24} /></TaskItem>
        <Tray>
          <Chevron dir="up" color="#fff" size={13} stroke={1.1} />
          <MeetNow /><Lan /><Speaker />
          <Clock>10:26 PM<br />6/2/2025</Clock>
          <Bubble />
          <ShowDesktop />
        </Tray>
      </Taskbar>
      <Explorer />
      <Installer />
      <LicenseWizard />
      <Watermark>
        <svg width="212" height="70" viewBox="0 0 212 70" fill="none">
          <defs>
            <linearGradient id="mark" x1="0" y1="0" x2="0" y2="1"><stop offset=".45" stopColor="#fff" /><stop offset=".6" stopColor="#eee" /></linearGradient>
          </defs>
          <text x="4" y="54" fontFamily="Roboto, sans-serif" fontSize="50" fill="url(#mark)" textLength="63" lengthAdjust="spacingAndGlyphs">ANY</text>
          <text x="134" y="54" fontFamily="Roboto, sans-serif" fontSize="50" fill="url(#mark)" textLength="64" lengthAdjust="spacingAndGlyphs">RUN</text>
          <path d="M88 6l41 28-41 29zM94 22v23l18-11zM78 13v46l10 6 38-24" stroke="#fff" strokeWidth="4" strokeLinejoin="round" />
        </svg>
      </Watermark>
    </Desktop>
  </>
);

export default App;
